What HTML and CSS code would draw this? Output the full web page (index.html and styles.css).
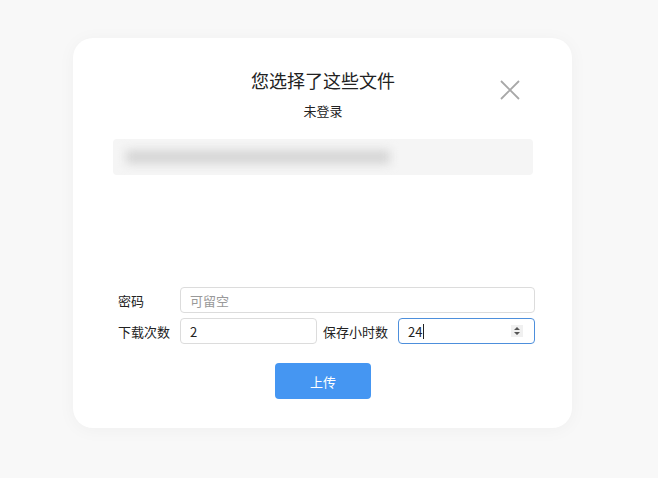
FILE: index.html
```html
<!DOCTYPE html>
<html lang="zh-CN">
<head>
<meta charset="UTF-8" />
<meta name="viewport" content="width=device-width, initial-scale=1" />
<title>上传文件</title>
<link rel="stylesheet" href="styles.css">
</head>
<body>
  <div class="card">
    <button class="close" type="button" aria-label="关闭">
      <svg width="20" height="20" viewBox="0 0 20 20">
        <path d="M1 1 L19 19 M19 1 L1 19" stroke="#a8a8a8" stroke-width="1.8" fill="none"/>
      </svg>
    </button>
    <h2 class="title">您选择了这些文件</h2>
    <div class="user">未登录</div>

    <div class="files">
      <span class="file-name"></span>
    </div>

    <form class="form">
      <label class="label">密码</label>
      <input class="input wide" type="text" placeholder="可留空">

      <label class="label">下载次数</label>
      <input class="input" type="text" value="2">
      <label class="label label-mid">保存小时数</label>
      <div class="num focused">
        <span class="num-value">24</span><span class="caret"></span>
        <svg class="spin" width="12" height="12" viewBox="0 0 12 12">
          <rect width="12" height="12" fill="#f0f0f0"/>
          <path d="M3 5 L6 2 L9 5 Z M3 7 L6 10 L9 7 Z" fill="#555"/>
        </svg>
      </div>
    </form>

    <button class="upload" type="button">上传</button>
  </div>
</body>
</html>
```

FILE: styles.css
```css
body {
  margin: 0;
  background: #f8f8f8;
  font-family: "Noto Sans CJK SC", "Microsoft YaHei", "Noto Sans", sans-serif;
  color: #222;
  min-height: 100vh;
}
.card {
  position: relative;
  box-sizing: border-box;
  width: 499px;
  margin: 38px 0 0 73px;
  padding: 29px 39px 29px 40px;
  background: #fff;
  border-radius: 20px;
  box-shadow: 0 2px 18px rgba(0,0,0,0.04);
  display: flex;
  flex-direction: column;
  align-items: center;
}
.close {
  position: absolute;
  top: 42px;
  right: 52px;
  padding: 0;
  border: none;
  background: none;
  width: 20px;
  height: 20px;
  cursor: pointer;
}
.close svg {
  display: block;
}
.title {
  margin: 0;
  font-size: 18px;
  font-weight: normal;
  line-height: 26px;
}
.user {
  margin-top: 8px;
  font-size: 13px;
  line-height: 20px;
}
.files {
  align-self: stretch;
  margin-top: 18px;
  height: 36px;
  background: #f5f5f5;
  border-radius: 4px;
  display: flex;
  align-items: center;
  padding-left: 13px;
}
.file-name {
  display: block;
  width: 264px;
  height: 14px;
  background: #d6d6d6;
  filter: blur(5px);
}
.form {
  align-self: flex-start;
  margin-top: 112px;
  width: 422px;
  display: grid;
  grid-template-columns: 67px 137px 81px 137px;
  row-gap: 5px;
  align-items: center;
}
.label {
  font-size: 13px;
  padding-left: 5px;
}
.label-mid {
  padding-left: 6px;
}
.input, .num {
  box-sizing: border-box;
  height: 26px;
  border: 1px solid #dcdcdc;
  border-radius: 4px;
  padding: 0 9px;
  font-family: inherit;
  font-size: 13px;
  color: #222;
  outline: none;
}
.input.wide {
  grid-column: 2 / 5;
}
.input::placeholder {
  color: #999;
}
.num {
  display: flex;
  align-items: center;
}
.num.focused {
  border-color: #4d8fdc;
}
.caret {
  width: 1px;
  height: 15px;
  background: #222;
  margin-left: 1px;
}
.spin {
  margin-left: auto;
  margin-right: 2px;
}
.upload {
  margin-top: 19px;
  width: 96px;
  height: 36px;
  border: none;
  border-radius: 4px;
  background: #4596f2;
  color: #fff;
  font-family: inherit;
  font-size: 13px;
  cursor: pointer;
}
.upload:hover {
  background: #3a87de;
}
```
